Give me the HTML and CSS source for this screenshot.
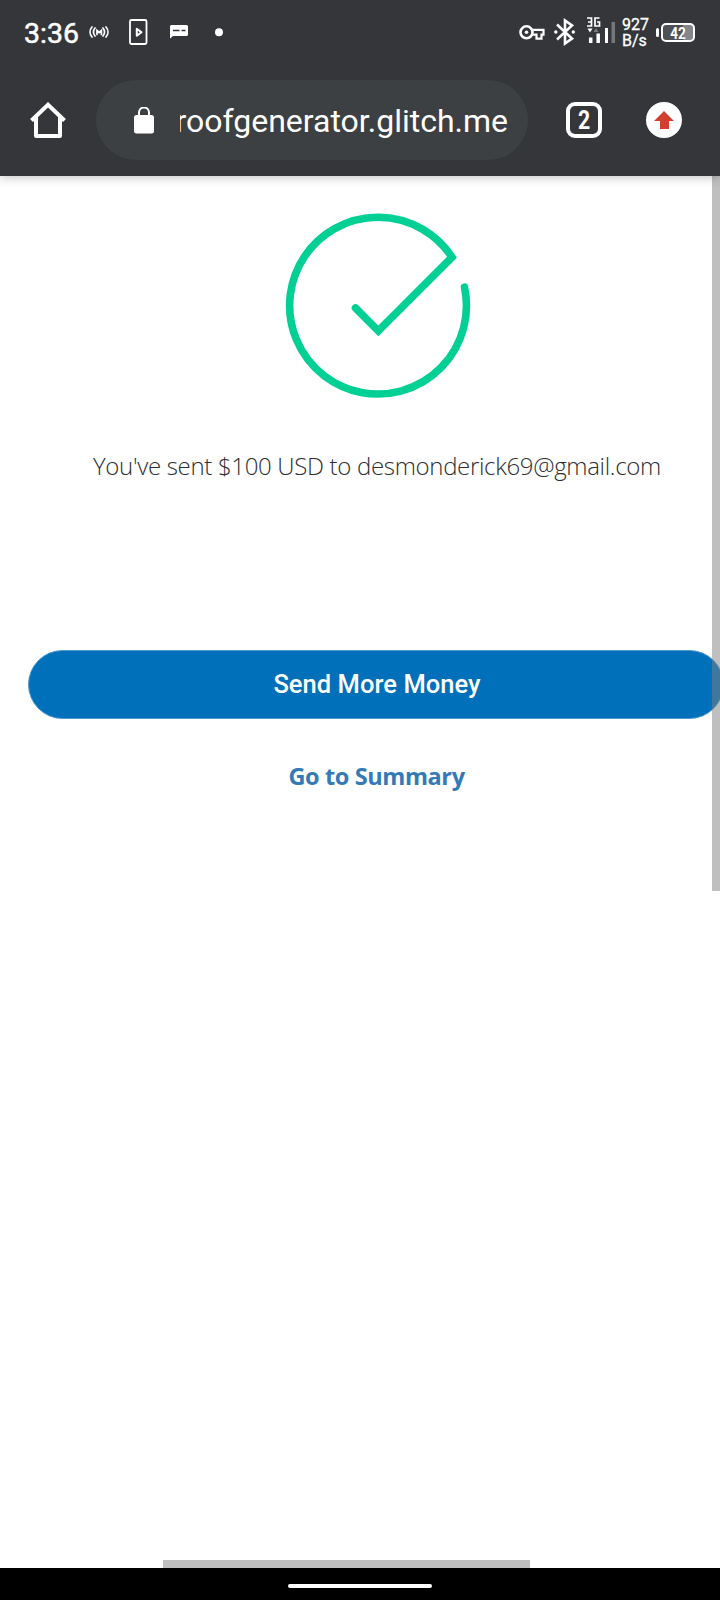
FILE: index.html
```html
<!DOCTYPE html>
<html lang="en">
<head>
<meta charset="utf-8">
<title>Payment sent</title>
<link rel="stylesheet" href="styles.css">
</head>
<body>
<div class="phone">
  <header class="chrome">
    <div class="status">
      <span class="clock">3:36</span>
      <svg class="status-left" width="140" height="64" viewBox="84 0 140 64" fill="none" stroke="#fff">
        <g stroke-width="1.700" stroke-linecap="round">
          <path d="M92 27c-2.600 3-2.600 7 0 10M95 28c-2 2.600-2 5.400 0 8M106 27c2.600 3 2.600 7 0 10M103 28c2 2.600 2 5.400 0 8"/>
          <path d="M97 34.500v-4l2.200 2 2.200-2v4"/>
        </g>
        <rect x="130" y="20" width="16.500" height="24" rx="1.500" stroke-width="1.800"/>
        <path d="M136.800 28.800v7l4.700-3.600z" stroke-width="2" stroke-linejoin="round"/>
        <path d="M171.500 25h15q1.500 0 1.500 1.500v8q0 1.500-1.500 1.500h-13.500l-3 2.500v-12q0-1.500 1.500-1.500z" fill="#fff" stroke="none"/>
        <path d="M173 30.500h6.500M181.500 30.500h4" stroke="#35363a" stroke-width="1.500"/>
        <circle cx="219" cy="32.200" r="4" fill="#fff" stroke="none"/>
      </svg>
      <svg class="status-right" width="90" height="64" viewBox="515 0 90 64" fill="none" stroke="#fff">
        <circle cx="526.500" cy="32.300" r="6" stroke-width="2.600"/>
        <circle cx="526.500" cy="32.300" r="1.800" fill="#fff" stroke="none"/>
        <path d="M532 29.800h11.500v4.800h-2v4h-5v-4h-4.500" stroke-width="2.200"/>
        <path d="M557 24.500l15 14-7 5v-23l7 5-15 14" stroke-width="2.600"/>
        <circle cx="555.800" cy="32" r="1.700" fill="#fff" stroke="none"/>
        <circle cx="573.300" cy="32" r="1.700" fill="#fff" stroke="none"/>
        <path d="M587 18h4.500v8h-4.500M588 22h3.500M599.500 18h-4.500v8h4.500v-4h-2.500" stroke-width="1.700"/>
        <path d="M587.500 28.500h5l-2.500 4z" fill="#fff" stroke="none"/>
        <path d="M593.500 32h5l-2.500-4z" fill="#77787b" stroke="none"/>
        <path d="M590.700 37.500v5.500M598.200 33.500v9.500" stroke-width="3.500"/>
      </svg>
      <svg width="11" height="64" viewBox="605 0 11 64"><path d="M604.500 28h3.500v15h-3.500z" fill="#fff"/><path d="M611.500 22h3.500v21h-3.500z" fill="#77787b"/></svg>
      <span class="speed">927<br>B/s</span>
      <span class="battery"><i class="battery-tip"></i><b class="battery-body"><span>42</span></b></span>
    </div>
    <div class="toolbar">
      <svg class="home" width="36" height="36" viewBox="0 0 36 36" fill="none" stroke="#fff" stroke-width="4" stroke-linejoin="round"><path d="M1.500 18.500L18 2.800l16.500 15.700" stroke-linejoin="miter"/><path d="M6 15v19h24v-19"/></svg>
      <div class="omnibox">
        <svg width="20" height="27" viewBox="0 0 20 27"><rect y="8" width="20" height="18.500" rx="2.500" fill="#fff"/><path d="M5 9v-3.500a5 5 0 0 1 10 0v3.500" fill="none" stroke="#fff" stroke-width="2"/></svg>
        <span class="url"><span>roofgenerator.glitch.me</span></span>
      </div>
      <span class="tabs"><span>2</span></span>
      <svg class="update" width="36" height="36" viewBox="0 0 36 36"><circle cx="18" cy="18" r="18" fill="#fff"/><path d="M18 9l10 10h-5v8h-9v-8h-6z" fill="#d23f31"/></svg>
    </div>
  </header>
  <main class="page">
    <svg class="check" width="190" height="190" viewBox="283 210 190 190" fill="none" stroke="#00d094" stroke-width="7.600" stroke-linecap="round"><path d="M355.500 308L378.300 330.900 452 257.200A88.400 88.400 0 1 0 464.500 287.200" stroke-linejoin="miter"/></svg>
    <p class="message">You've sent $100 USD to desmonderick69@gmail.com</p>
    <button class="send">Send More Money</button>
    <a class="summary">Go to Summary</a>
    <i class="scroll-y"></i>
    <i class="scroll-x"></i>
  </main>
  <footer class="gesture"><i></i></footer>
</div>
</body>
</html>
```
FILE: styles.css
```css
* { box-sizing: border-box; }
body { margin: 0; background: #fff; font-family: Roboto, sans-serif; }
.phone { width: 720px; height: 1600px; display: flex; flex-direction: column; overflow: hidden; }
.chrome { height: 176px; flex: none; background: #35363a; color: #fff; position: relative; z-index: 1; box-shadow: 0 1px 10px rgba(0, 0, 0, .26); }
.status { height: 64px; display: flex; align-items: center; padding-left: 24px; }
.clock { width: 60px; font-size: 28.500px; line-height: 64px; font-weight: 400; -webkit-text-stroke: .5px #fff; padding-top: 3px; }
.status-right { margin-left: 291px; }
.speed { width: 36px; margin: 2px 0 0 6px; font-size: 16px; line-height: 16.500px; white-space: nowrap; font-weight: 400; -webkit-text-stroke: .3px #fff; }
.battery { display: flex; align-items: center; gap: 1.500px; margin-left: -2px; }
.battery-tip { width: 3px; height: 9px; border-radius: 2px; background: #fff; }
.battery-body { width: 34px; height: 19px; border: 2px solid #fff; border-radius: 5px; font-size: 17px; line-height: 16px; text-align: center; background: linear-gradient(90deg, #505155 66%, #85868a 66%); }
.battery-body span { display: block; transform: scaleX(.8); }
.toolbar { height: 112px; display: flex; align-items: center; padding-left: 30px; }
.omnibox { width: 432px; height: 80px; border-radius: 40px; margin-left: 30px; background: #3c4043; display: flex; align-items: center; padding-left: 38px; }
.url { width: 328px; margin-left: 26px; margin-top: 2px; overflow: hidden; display: flex; justify-content: flex-end; font-size: 32px; line-height: 44px; }
.tabs { width: 36px; height: 36px; margin-left: 38px; border: 4px solid #fff; border-radius: 9px; text-align: center; font: 700 25px/30px Roboto, sans-serif; }
.tabs span { display: block; transform: scaleX(.85); }
.update { margin-left: 44px; }
.page { position: relative; flex: 1; display: flex; flex-direction: column; align-items: flex-start; padding-top: 34px; overflow: hidden; }
.check { margin-left: 283px; flex: none; }
.message { margin: 48px 0 0 93px; font: 300 24px/36px "Open Sans", sans-serif; letter-spacing: -.32px; color: #2c2e2f; white-space: nowrap; }
.send { flex: none; width: 696px; height: 69px; margin: 166px 0 0 28px; padding: 0 0 2px 2px; border: 1px solid #4d9bcf; border-radius: 35px; background: #0070ba; color: #fff; font: 500 25.500px/60px Roboto, sans-serif; letter-spacing: .05px; }
.summary { margin: 39px 0 0 288.500px; color: #337ab7; font: 700 23.500px/36px "Open Sans", sans-serif; letter-spacing: -.4px; white-space: nowrap; }
.scroll-y { position: absolute; right: 0; top: 0; width: 8px; height: 715px; background: rgba(128, 128, 128, .5); }
.scroll-x { position: absolute; left: 163px; bottom: 0; width: 367px; height: 8px; background: rgba(128, 128, 128, .5); }
.gesture { height: 32px; flex: none; background: #000; display: flex; justify-content: center; padding-top: 16px; }
.gesture i { width: 144px; height: 4px; border-radius: 2px; background: #fff; }
```
